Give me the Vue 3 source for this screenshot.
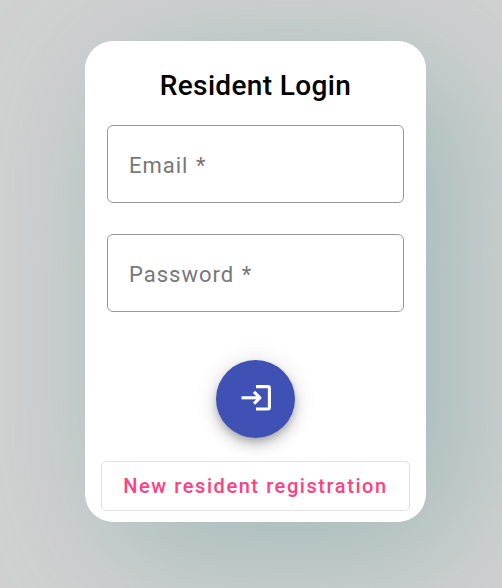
<script setup>
const fields = ['Email *', 'Password *']
</script>

<template>
  <main class="page">
    <form class="card" @submit.prevent>
      <h1 class="title">Resident Login</h1>
      <div class="fields">
        <label v-for="field in fields" :key="field" class="field">{{ field }}</label>
      </div>
      <button class="fab" type="submit" aria-label="Login">
        <svg width="34" height="34" viewBox="0 0 34 34" fill="none" stroke="#fff" stroke-width="3.1">
          <path d="M17 5.6H28.7Q30.4 5.6 30.4 7.3V26.3Q30.4 28 28.7 28H17" />
          <path d="M2.5 16.8H21" />
          <path d="M15 10.9L20.9 16.8L15 22.7" stroke-linejoin="round" />
        </svg>
      </button>
      <button class="register" type="button">New resident registration</button>
    </form>
  </main>
</template>

<style>
body {
  margin: 0;
}
</style>

<style scoped>
.page {
  box-sizing: border-box;
  height: 588px;
  padding: 41px 76px 0 85px;
  overflow: hidden;
  background: #d1d1d1;
  font-family: Roboto, "Liberation Sans", sans-serif;
}
.card {
  box-sizing: border-box;
  display: flex;
  flex-direction: column;
  align-items: center;
  width: 341px;
  height: 481px;
  padding-top: 25px;
  border-radius: 28px;
  background: #fff;
  box-shadow: 28px 28px 140px #9eb8b9;
}
.title {
  margin: 0;
  font-size: 28px;
  font-weight: 500;
  line-height: 39px;
  letter-spacing: 0.36px;
  color: #000;
}
.fields {
  display: grid;
  gap: 31px;
  margin-top: 20px;
}
.field {
  box-sizing: border-box;
  display: flex;
  align-items: center;
  width: 297px;
  height: 78px;
  padding: 3px 21px 0;
  border: 1px solid #999;
  border-radius: 6px;
  font-size: 22px;
  letter-spacing: 1px;
  word-spacing: 1px;
  color: #777;
}
.fab {
  display: flex;
  align-items: center;
  justify-content: center;
  width: 79px;
  height: 78px;
  margin-top: 48px;
  padding: 0 0 2px;
  border: 0;
  border-radius: 50%;
  background: #3f51b5;
  box-shadow: 0 4px 7px -1px rgba(0, 0, 0, 0.2), 0 8px 14px rgba(0, 0, 0, 0.14), 0 1px 25px rgba(0, 0, 0, 0.12);
}
.register {
  box-sizing: border-box;
  width: 309px;
  height: 50px;
  margin-top: 23px;
  padding: 0;
  border: 1px solid #e0e0e0;
  border-radius: 5px;
  background: #fff;
  font-family: inherit;
  font-size: 20px;
  font-weight: 500;
  letter-spacing: 1.57px;
  white-space: nowrap;
  color: #ff4081;
}
</style>
